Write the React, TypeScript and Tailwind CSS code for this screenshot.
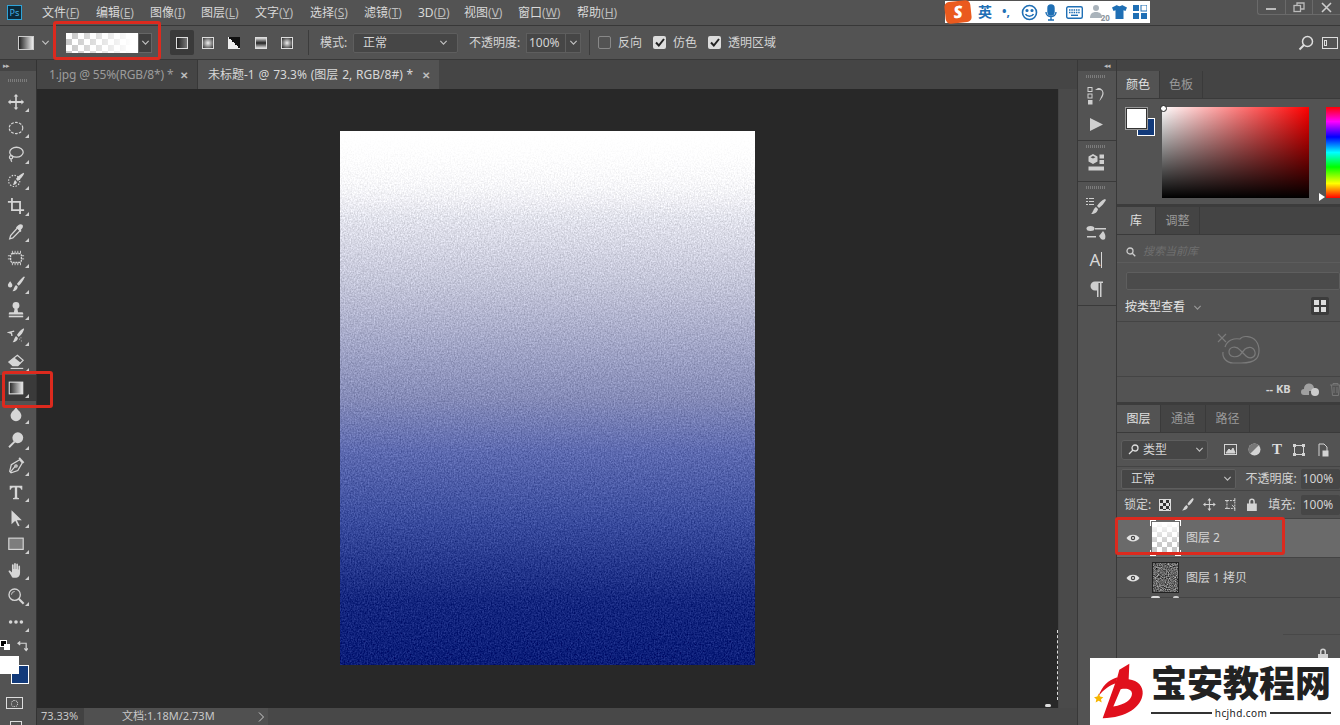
import React from "react";

const C = "#d6d6d6";

function Chev({ c = "#c4c4c4", s = 9 }: { c?: string; s?: number }) {
  return (
    <svg width={s} height={s} viewBox="0 0 10 10" fill="none" stroke={c} strokeWidth="1.2">
      <path d="M1.5 3.2 5 6.8 8.5 3.2" />
    </svg>
  );
}

function U({ t, k }: { t: string; k: string }) {
  return (
    <span className="whitespace-nowrap">
      {t}
      <span className="text-[#bdbdbd]">
        (<span className="underline">{k}</span>)
      </span>
    </span>
  );
}

const toolIcons: React.ReactNode[] = [
  <g key="m" fill={C}><path d="M10 1 7.4 4h1.7v5H4V7.3L1 10l3 2.7V11h5.1v5H7.4l2.6 3 2.6-3h-1.7v-5H16v1.7l3-2.7-3-2.7V9h-5.1V4h1.7z" /></g>,
  <ellipse key="e" cx="10" cy="10" rx="7.5" ry="6.2" fill="none" stroke={C} strokeWidth="1.3" strokeDasharray="3 1.4" />,
  <g key="l" fill="none" stroke={C} strokeWidth="1.4"><ellipse cx="10.5" cy="8" rx="7.5" ry="5.5" /><circle cx="4.5" cy="13.5" r="1.8" /><path d="M4.5 15.5c-.3 1.4.2 2.4 1 3" /></g>,
  <g key="q"><circle cx="8" cy="11" r="6.2" fill="none" stroke={C} strokeWidth="1.3" strokeDasharray="1.6 1.6" /><path d="M18.5 2 19 3c-1.500 3-4 6-7 8l-2-2c2-3 5-5.500 8.500-7zM9 10l2 2.500c-.5 2-2 3-4.500 3 1-1 1-4 2.500-5.500z" fill={C} /></g>,
  <g key="c" fill="none" stroke={C} strokeWidth="2"><path d="M5.500 1v13.500H19" /><path d="M1 5.500h13.500V19" /></g>,
  <g key="d"><path d="m12 5 3 3-8.500 8.500-3.500 1 1-3.500z" fill="none" stroke={C} strokeWidth="1.4" /><path d="m11 4 1.500-1.500c1.500-1.500 3.500-1.500 4.500-.5s1 3-.5 4.500L15 8l1 1-1 1-5-5 1-1z" fill={C} /></g>,
  <g key="h" fill="none" stroke={C}><rect x="4" y="5" width="12" height="10" rx="2.500" strokeWidth="1.400" strokeDasharray="2.200 .8" /><path strokeWidth="1" d="M6 2v3M9 2v3M12 2v3M15 2v3M6 15v3M9 15v3M12 15v3M15 15v3M1 7.500h3M1 11h3M16 7.500h3M16 11h3" /></g>,
  <g key="b" fill={C}><path d="M19 1.500 19.500 2.500c-1 3.500-4 7-6.500 9.500l-2-2C13 7 16 4 19 1.500z" /><path d="M10 11l2 2c-.3 3-2.600 5-6 5 1.700-1.500 1.700-5 4-7zM3.500 7C3.500 7 1 10 1 11.500a2.500 2.500 0 0 0 5 0C6 10 3.500 7 3.500 7z" /></g>,
  <g key="s" fill={C}><circle cx="10" cy="5" r="3.800" /><path d="M8.500 8h3l.8 4.500H17a1.500 1.500 0 0 1 1 1.500v1H2v-1a1.500 1.500 0 0 1 1-1.500h4.700z" /><rect x="2" y="16.300" width="16" height="1.800" /></g>,
  <g key="hb"><path d="M18.500 1.500 19 2.500c-1 3-3 6.500-6 8.500l-2-2c2-3 4.500-6 7.500-7.500zM10 10l2.200 2.200c-.4 2.800-2.700 4.800-6 4.800 1.700-1.500 1.500-4.800 3.800-7z" fill={C} /><path d="M8 4.500 2 6l3 1 .5 3" fill="none" stroke={C} strokeWidth="1.500" /><path d="M14 13v1M16 15v1M15 12h1" stroke={C} /></g>,
  <g key="er"><path d="M11.500 2.500 18 8l-6 6H6.500L2 10z" fill="none" stroke={C} strokeWidth="1.300" /><path d="M2 10l4.500 4.500h5.500L15.500 11 8 5z" fill={C} /><rect x="4" y="16.500" width="14" height="1.300" fill={C} /></g>,
  <g key="g"><defs><linearGradient id="tg"><stop offset="0" stopColor="#222" /><stop offset="1" stopColor="#eee" /></linearGradient></defs><rect x="2.500" y="3.500" width="15" height="13" fill="url(#tg)" stroke="#e4e4e4" strokeWidth="1.200" /></g>,
  <path key="bl" d="M10 2.500C12 6 16 8 16 12a6 6 0 0 1-12 0c0-4 4-6 6-9.500z" fill={C} />,
  <g key="do" fill={C}><circle cx="12" cy="7.500" r="6" /><path d="m7.700 11 1.500 1.500L3 18.800 1.500 17.300z" /></g>,
  <g key="p" fill="none" stroke={C} strokeWidth="1.400"><path d="M14 3 17 6.500 12 15l-7.500 2.500L3 16l1.800-7.500z" /><path d="M3.500 17 9 10.500" /><circle cx="10" cy="10" r="1.300" /><path d="m13.500 1 5 5.500" strokeWidth="2" /></g>,
  <path key="t" d="M3 3h14v4.500h-1.200c-.3-1.500-1-2.600-2.800-2.600h-1.700v10.600c0 .8.500 1 2 1.100V18H6.700v-1.400c1.500-.1 2-.3 2-1.100V4.900H7c-1.800 0-2.500 1.100-2.800 2.600H3z" fill={C} />,
  <path key="ps" d="M5 1.500 16.500 12.500H11l3 6-1.800.8-3-6.300L5 17z" fill={C} />,
  <rect key="r" x="2" y="3.500" width="16" height="12.500" fill="#7d7d7d" stroke={C} strokeWidth="1.300" />,
  <path key="ha" d="M5.500 17.500 1.800 11.800c-.5-1 .8-1.900 1.700-1l2 2V4.500c0-1.200 1.900-1.200 1.900 0V9h.5V3c0-1.200 1.900-1.200 1.900 0v6h.5V3.800c0-1.200 1.900-1.200 1.900 0V9.500h.5V6c0-1.200 1.800-1.200 1.800 0v7c0 3-1.500 5.500-4.200 5.500h-3c-1 0-1.800-.3-2.300-1z" fill={C} />,
  <g key="z" fill="none" stroke={C}><circle cx="8.500" cy="8.500" r="6.300" strokeWidth="1.500" /><path d="m13 13 5.500 5.500" strokeWidth="2.400" /><path d="M5 8.500a3.500 3.500 0 0 1 3.500-3.500" strokeWidth="1" /></g>,
  <g key="dots" fill={C}><circle cx="4" cy="10" r="2" /><circle cx="10" cy="10" r="2" /><circle cx="16" cy="10" r="2" /></g>,
];

function Handle() {
  return <div className="h-[3px] w-[20px] bg-[repeating-linear-gradient(to_right,#7c7c7c_0_1px,transparent_1px_2px)]" />;
}

function LeftBar() {
  return (
    <div className="w-[37px] shrink-0 flex flex-col border-r border-[#333] bg-[#535353]">
      <div className="h-[11px] bg-[#444] flex items-center pl-[3px] text-[7px] leading-none text-[#bbb] tracking-[-1px]">▸▸</div>
      <div className="h-[18px] flex items-center justify-center"><Handle /></div>
      {toolIcons.map((ic, i) => (
        <div key={i} className={`h-[26px] w-[36px] relative flex items-center justify-center ${i === 11 ? "bg-[#3a3a3a]" : ""}`}>
          <svg width="18" height="18" viewBox="0 0 20 20" className="-ml-[5px]">{ic}</svg>
          <div className="absolute right-[7px] bottom-[3px] w-0 h-0 border-l-[4px] border-l-transparent border-b-[4px] border-b-[#cfcfcf]" />
        </div>
      ))}
      <div className="relative flex-1">
        <div className="absolute left-0 top-[5px] w-[7px] h-[7px] bg-black border border-white" />
        <div className="absolute left-[4px] top-[9px] w-[6px] h-[6px] bg-white -z-0" />
        <svg className="absolute left-[17px] top-[5px]" width="11" height="12" viewBox="0 0 12 12" fill="none" stroke={C} strokeWidth="1.300">
          <path d="M1 3h9v8M3.500 1 1 3l2.500 2M8 8.500l2 2.500 2-2.500" />
        </svg>
        <div className="absolute left-[11px] top-[30px] w-[18px] h-[19px] bg-[#123a7a] border border-white" />
        <div className="absolute left-0 top-[21px] w-[19px] h-[18px] bg-white" />
        <div className="absolute left-[6px] top-[62px] w-[17px] h-[12px] border border-[#ddd] flex items-center justify-center">
          <div className="w-[7px] h-[7px] rounded-full border border-dotted border-[#ddd]" />
        </div>
        <div className="absolute left-[10px] top-[86px] w-[12px] h-[6px] border border-[#ddd]" />
      </div>
    </div>
  );
}

function MenuBar() {
  const items: [string, string][] = [["文件", "F"], ["编辑", "E"], ["图像", "I"], ["图层", "L"], ["文字", "Y"], ["选择", "S"], ["滤镜", "T"], ["3D", "D"], ["视图", "V"], ["窗口", "W"], ["帮助", "H"]];
  const widths = [54, 54, 51, 54, 55, 54, 54, 46, 54, 59, 50];
  return (
    <div className="h-[26px] shrink-0 flex items-center border-b border-[#383838] bg-[#535353] relative">
      <div className="ml-[7px] w-[15px] h-[15px] bg-[#0c2a3a] border border-[#2fa3d8] flex items-center justify-center text-[9px] leading-none text-[#43b3e6]">Ps</div>
      <div className="ml-[20px] flex text-[12px] text-[#d9d9d9]">
        {items.map(([t, k], i) => (
          <div key={k} style={{ width: widths[i] }}><U t={t} k={k} /></div>
        ))}
      </div>
      <ImeBar />
      <div className="absolute right-0 top-0 h-[15px] w-[83px] flex border border-t-0 border-r-0 border-[#6a6a6a] rounded-bl-[3px]">
        <div className="flex-1 flex items-center justify-center border-r border-[#6a6a6a]"><div className="w-[10px] h-[2px] bg-[#bbb] mt-[4px]" /></div>
        <div className="flex-1 flex items-center justify-center border-r border-[#6a6a6a]">
          <svg width="12" height="11" viewBox="0 0 12 11" fill="none" stroke="#bbb" strokeWidth="1.300"><rect x="1" y="3.500" width="6.500" height="6" /><path d="M4 3V1h7v6H8" /></svg>
        </div>
        <div className="flex-1 flex items-center justify-center">
          <svg width="11" height="11" viewBox="0 0 11 11" stroke="#ccc" strokeWidth="1.600"><path d="M1 1l9 9M10 1l-9 9" /></svg>
        </div>
      </div>
    </div>
  );
}

function ImeBar() {
  const b = "#1f6fb5";
  return (
    <div className="absolute left-[945px] top-[1px] h-[22px] w-[205px] bg-white flex items-center">
      <div className="w-[26px] h-[22px] bg-[#ea5a1e] rounded-[5px] -rotate-6 flex items-center justify-center text-white font-black text-[17px] leading-[20px] italic">S</div>
      <span className="ml-[7px] text-[14px] font-bold leading-none" style={{ color: b }}>英</span>
      <span className="ml-[10px] text-[12px] font-bold leading-none text-[#1f6fb5]">•,</span>
      <svg className="ml-[11px]" width="17" height="17" viewBox="0 0 17 17" fill="none" stroke={b} strokeWidth="1.600"><circle cx="8.500" cy="8.500" r="7" /><circle cx="6" cy="6.500" r=".8" fill={b} /><circle cx="11" cy="6.500" r=".8" fill={b} /><path d="M4.500 10c1.500 3 6.500 3 8 0" /></svg>
      <svg className="ml-[7px]" width="12" height="17" viewBox="0 0 12 17" fill="none" stroke={b} strokeWidth="1.400"><rect x="3" y="1" width="6" height="10" rx="3" fill={b} /><path d="M1 8c0 6 10 6 10 0M6 12.500V16M3 16h6" /></svg>
      <svg className="ml-[9px]" width="17" height="13" viewBox="0 0 17 13"><rect x=".7" y=".7" width="15.600" height="11.600" rx="1.500" fill="none" stroke={b} strokeWidth="1.400" /><path d="M3 4h11M3 6.500h11" stroke={b} strokeWidth="1.400" strokeDasharray="1.500 .8" /><path d="M5 9.300h7" stroke={b} strokeWidth="1.400" /></svg>
      <div className="ml-[7px] relative w-[18px] h-[16px]">
        <svg width="12" height="15" viewBox="0 0 12 15" fill="#a9b3bb"><circle cx="6" cy="4" r="3" /><path d="M0 14c0-4 2-6 6-6s6 2 6 6z" /></svg>
        <span className="absolute right-[-2px] bottom-[-2px] text-[8px] leading-none font-bold text-[#8b959d]">20</span>
      </div>
      <svg className="ml-[4px]" width="15" height="14" viewBox="0 0 15 14" fill={b}><path d="M5 0c.6 1.500 4.400 1.500 5 0l5 2.500-1.500 3.500-2-.8V14H3.500V5.200l-2 .8L0 2.500z" /></svg>
      <svg className="ml-[6px]" width="14" height="14" viewBox="0 0 14 14" fill={b}><rect width="6" height="6" /><rect x="8" y="0" width="6" height="6" fill="none" stroke={b} /><rect y="8" width="6" height="6" /><rect x="8" y="8" width="6" height="6" /></svg>
    </div>
  );
}

function Sep() {
  return <div className="w-px h-[25px] bg-[#3c3c3c]" />;
}

function ModeIcon({ bg }: { bg: string }) {
  return <div className={`w-[12px] h-[12px] border border-[#ddd] ${bg}`} />;
}

function Check({ on }: { on: boolean }) {
  return on ? (
    <div className="w-[13px] h-[13px] rounded-[2px] bg-[#dcdcdc] flex items-center justify-center">
      <svg width="10" height="9" viewBox="0 0 10 9" fill="none" stroke="#222" strokeWidth="2"><path d="M1 4.500 3.800 7.500 9 1" /></svg>
    </div>
  ) : (
    <div className="w-[13px] h-[13px] rounded-[2px] border border-[#888]" />
  );
}

function OptionsBar() {
  return (
    <div className="h-[34px] shrink-0 flex items-center border-b border-[#383838] bg-[#535353] text-[12px] text-[#d4d4d4]">
      <div className="ml-[18px] w-[16px] h-[14px] border border-[#ccc] bg-[linear-gradient(to_right,#222,#eee)]" />
      <div className="ml-[7px]"><Chev /></div>
      <div className="ml-[4px]"><Sep /></div>
      <div className="ml-[11px] w-[72px] h-[20px] bg-[linear-gradient(to_right,#fff0,#fff_92%),repeating-conic-gradient(#c6c6c6_0_25%,#fff_0_50%)] bg-[length:100%_100%,12px_12px]" />
      <div className="w-[14px] h-[20px] bg-[#3f3f3f] border border-[#666] flex items-center justify-center"><Chev /></div>
      <div className="ml-[18px] w-[24px] h-[25px] bg-[#3a3a3a] rounded-[2px] flex items-center justify-center">
        <div className="w-[12px] h-[12px] border border-[#ddd] bg-[linear-gradient(to_right,#222,#777)]" />
      </div>
      <div className="ml-[8px] w-[12px]"><ModeIcon bg="bg-[radial-gradient(circle,#eee,#333)]" /></div>
      <div className="ml-[14px] w-[12px] h-[12px] bg-[linear-gradient(45deg,#eee_50%,#111_50%)]" />
      <div className="ml-[15px] w-[12px]"><ModeIcon bg="bg-[linear-gradient(to_bottom,#ddd,#222_50%,#ddd)]" /></div>
      <div className="ml-[14px] w-[12px]"><ModeIcon bg="bg-[radial-gradient(circle,#eee,#222)]" /></div>
      <div className="ml-[15px]"><Sep /></div>
      <span className="ml-[11px] w-[33px]">模式:</span>
      <div className="w-[105px] h-[20px] bg-[#464646] border border-[#5e5e5e] rounded-[2px] flex items-center justify-between px-[9px]">
        <span>正常</span><Chev />
      </div>
      <span className="ml-[11px] w-[57px]">不透明度:</span>
      <div className="w-[40px] h-[20px] bg-[#464646] border border-[#5e5e5e] flex items-center pl-[2px]">100%</div>
      <div className="w-[15px] h-[20px] bg-[#464646] border border-l-0 border-[#5e5e5e] flex items-center justify-center"><Chev /></div>
      <div className="ml-[8px]"><Sep /></div>
      <div className="ml-[8px]"><Check on={false} /></div>
      <span className="ml-[7px] w-[28px]">反向</span>
      <div className="ml-[7px]"><Check on /></div>
      <span className="ml-[7px] w-[28px]">仿色</span>
      <div className="ml-[7px]"><Check on /></div>
      <span className="ml-[7px] w-[50px] whitespace-nowrap">透明区域</span>
      <div className="ml-auto flex items-center gap-[8px] pr-[2px]">
        <svg width="16" height="16" viewBox="0 0 16 16" fill="none" stroke="#ddd"><circle cx="9.500" cy="6.500" r="5" strokeWidth="1.500" /><path d="M6 10 1.500 14.500" strokeWidth="2" /></svg>
        <div className="w-[16px] h-[12px] border border-[#ddd] flex items-center pl-[1px]"><div className="w-[3px] h-[6px] border border-[#ddd]" /></div>
      </div>
    </div>
  );
}

function Tabs() {
  return (
    <div className="h-[29px] shrink-0 flex bg-[#454545] text-[12px] text-[#d8d8d8]">
      <div className="w-[161px] flex items-center pl-[12px] border-r border-[#383838] text-[#9c9c9c]">
        <span className="w-[123px] whitespace-nowrap tracking-[-0.15px]">1.jpg @ 55%(RGB/8*) *</span>
        <span className="ml-[8px] text-[10px] leading-none font-bold text-[#bdbdbd]">✕</span>
      </div>
      <div className="w-[241px] flex items-center pl-[10px] bg-[#535353]">
        <span className="w-[205px] whitespace-nowrap [word-spacing:.7px]">未标题-1 @ 73.3% (图层 2, RGB/8#) *</span>
        <span className="ml-[9px] text-[10px] leading-none font-bold text-[#bdbdbd]">✕</span>
      </div>
    </div>
  );
}

function Doc() {
  return (
    <svg width="415" height="534" className="block" aria-label="doc">
      <defs>
        <linearGradient id="docg" x1="0" y1="0" x2="0" y2="1">
          <stop offset="0" stopColor="#ffffff" />
          <stop offset=".1" stopColor="#f2f2f6" />
          <stop offset=".3" stopColor="#bfc1d6" />
          <stop offset=".5" stopColor="#858bb8" />
          <stop offset=".6" stopColor="#5d6ab0" />
          <stop offset=".73" stopColor="#3a4c9e" />
          <stop offset=".88" stopColor="#14267f" />
          <stop offset="1" stopColor="#0a1c78" />
        </linearGradient>
        <filter id="grain" x="0" y="0" width="100%" height="100%" colorInterpolationFilters="sRGB">
          <feTurbulence type="fractalNoise" baseFrequency="0.7 0.6" numOctaves="2" seed="4" result="n" />
          <feColorMatrix in="n" type="matrix" values="0 0 0 1 0  0 0 0 1 0  0 0 0 1 0  0 0 0 0 1" result="g" />
          <feComposite in="SourceGraphic" in2="g" operator="arithmetic" k1="0" k2="1" k3="0.3" k4="-0.15" />
        </filter>
        <linearGradient id="topfade" x1="0" y1="0" x2="0" y2="1">
          <stop offset="0" stopColor="#fff" stopOpacity="1" />
          <stop offset=".16" stopColor="#fff" stopOpacity="0" />
        </linearGradient>
      </defs>
      <rect width="415" height="534" fill="url(#docg)" filter="url(#grain)" />
      <rect width="415" height="534" fill="url(#topfade)" />
    </svg>
  );
}

function Middle() {
  return (
    <div className="w-[1040px] shrink-0 flex flex-col">
      <Tabs />
      <div className="flex-1 flex min-h-0">
        <div className="w-[1021px] bg-[#282828] flex items-center justify-center relative pb-[1px]">
          <Doc />
          <div className="absolute right-0 bottom-[8px] h-[70px] border-r border-dashed border-[#ddd]" />
          <div className="absolute right-[7px] bottom-[1px] w-[6px] h-[3px] bg-[#ddd] rounded-full" />
        </div>
        <div className="w-[19px] bg-[#4a4a4a] border-l border-[#444]" />
      </div>
      <div className="h-[17px] shrink-0 flex items-center bg-[#484848] text-[11px] text-[#c8c8c8]">
        <div className="w-[47px] h-full bg-[#424242] pl-[4px] flex items-center">73.33%</div>
        <div className="w-[184px] h-full bg-[#505050] flex items-center pl-[38px] relative">
          <span className="whitespace-nowrap">文档:1.18M/2.73M</span>
          <svg className="absolute right-[3px]" width="7" height="10" viewBox="0 0 7 10" fill="none" stroke="#ccc"><path d="M1 0.500 5.500 5 1 9.500" /></svg>
        </div>
      </div>
    </div>
  );
}

function Dock() {
  const g = "#cfcfcf";
  return (
    <div className="w-[40px] shrink-0 flex flex-col bg-[#535353] border-l border-r border-[#383838] pl-[0px]">
      <div className="h-[11px] bg-[#444] flex justify-end items-center pr-[6px] text-[7px] leading-none text-[#bbb] tracking-[-1px]">◂◂</div>
      <div className="h-[70px] flex flex-col items-center border-b border-[#3a3a3a] pt-[4px] pr-[2px]">
        <Handle />
        <svg className="mt-[9px]" width="18" height="18" viewBox="0 0 18 18" fill={g}>
          <rect x="1" y="0.500" width="4" height="4" fill="none" stroke={g} /><rect x="1" y="7" width="4" height="4" fill="none" stroke={g} /><rect x="1" y="13" width="4.500" height="4.500" />
          <path d="M8 3h5c3 0 3 4 1 7l-2 4.500c2-2 5-6 4.500-9-.5-3-3-4.500-4.500-4.500H11L8 3z" />
        </svg>
        <svg className="mt-[12px]" width="15" height="15" viewBox="0 0 15 15" fill={g}><path d="M1 1 14 7.500 1 14z" /></svg>
      </div>
      <div className="h-[41px] flex flex-col items-center border-b border-[#3a3a3a] pt-[4px] pr-[2px]">
        <Handle />
        <svg className="mt-[6px]" width="17" height="17" viewBox="0 0 17 17" fill={g}>
          <path d="M5 0 9.500 2.500v5L5 10 .5 7.500v-5zM5 2 2.500 3.300 5 4.600l2.500-1.300z" fillRule="evenodd" />
          <rect x="11.500" y="0.500" width="4.500" height="4" /><rect x="11.500" y="6" width="4.500" height="4" /><rect x="0.500" y="12.500" width="15.500" height="4" />
        </svg>
      </div>
      <div className="h-[124px] flex flex-col items-center border-b border-[#3a3a3a] pt-[4px] pr-[2px]">
        <Handle />
        <svg className="mt-[8px]" width="20" height="18" viewBox="0 0 20 18" fill={g}>
          <path d="M0 1h2v1H0zM3 1h5v1H3zM0 4h2v1H0zM3 4h5v1H3zM0 7h2v1H0zM3 7h5v1H3z" />
          <path d="M19 2 20 3c-2 3-4 6-7 8l-2-2c2-3 5-6 8-7zM10 10l2 2c-.4 3-3 5-7 5 2-1 2-5 5-7z" />
        </svg>
        <svg className="mt-[10px]" width="20" height="17" viewBox="0 0 20 17" fill={g}>
          <ellipse cx="4.500" cy="3.500" rx="4" ry="2.500" /><rect x="9" y="3" width="11" height="1.500" /><rect x="1" y="11" width="9" height="1.500" />
          <path d="M17 6c2 2 3 5 2 8-1 1-3 1-4 0l-2-3z" />
        </svg>
        <span className="mt-[8px] text-[17px] leading-[20px] text-[#d8d8d8] flex items-center">A<span className="w-px h-[16px] bg-[#d8d8d8] ml-[1px]" /></span>
        <svg className="mt-[11px]" width="13" height="16" viewBox="0 0 13 16" fill={g}><path d="M5 0.500h8V2h-1.500v14H10V2H8.500v14H7V9.500H5A4.500 4.500 0 0 1 5 0.500z" /></svg>
      </div>
    </div>
  );
}

function TabHead({ tabs, h = 28, widths }: { tabs: string[]; h?: number; widths: number[] }) {
  return (
    <div className="flex bg-[#444] text-[12px] border-b border-[#3a3a3a] shrink-0" style={{ height: h }}>
      {tabs.map((t, i) => (
        <div key={t} style={{ width: widths[i] }} className={`flex items-center justify-center border-r border-[#3a3a3a] ${i === 0 ? "bg-[#535353] text-[#e0e0e0]" : "text-[#9a9a9a]"}`}>
          {t}
        </div>
      ))}
    </div>
  );
}

function ColorPanel() {
  return (
    <div className="h-[136px] shrink-0 border-b-[3px] border-[#3c3c3c] flex flex-col">
      <TabHead tabs={["颜色", "色板"]} widths={[43, 43]} />
      <div className="flex flex-1 pt-[8px] pl-[9px]">
        <div className="relative w-[36px] h-[34px] shrink-0">
          <div className="absolute left-[11px] top-[11px] w-[18px] h-[18px] bg-[#123a7a] border border-white" />
          <div className="absolute left-0 top-[1px] w-[21px] h-[21px] bg-white border border-[#333] outline outline-1 outline-[#999]" />
        </div>
        <div className="relative w-[147px] h-[91px] shrink-0 bg-[linear-gradient(to_top,#000,transparent),linear-gradient(to_right,#fff,#f00)]">
          <div className="absolute -left-[2px] -top-[2px] w-[7px] h-[7px] rounded-full border border-[#222] bg-white" />
        </div>
        <div className="ml-[17px] w-[14px] relative h-[91px] shrink-0 bg-[linear-gradient(to_bottom,#f00,#f0f_16%,#00f_33%,#0ff_50%,#0f0_66%,#ff0_84%,#f00)]">
          <div className="absolute -left-[7px] bottom-[-3px] w-0 h-0 border-l-[6px] border-l-white border-y-[4px] border-y-transparent" />
        </div>
      </div>
    </div>
  );
}

function LibPanel() {
  return (
    <div className="h-[198px] shrink-0 border-b-[3px] border-[#3c3c3c] flex flex-col text-[12px]">
      <TabHead tabs={["库", "调整"]} widths={[39, 44]} />
      <div className="h-[28px] flex items-center pl-[9px] pt-[6px] border-b border-[#5c5c5c] shrink-0">
        <svg width="10" height="10" viewBox="0 0 10 10" fill="none" stroke="#ccc" strokeWidth="1.300"><circle cx="4" cy="4" r="3" /><path d="m6.300 6.300 3 3" /></svg>
        <span className="ml-[7px] italic text-[11px] text-[#6f6f6f]">搜索当前库</span>
      </div>
      <div className="h-[18px] mt-[9px] ml-[9px] bg-[#4b4b4b] border border-[#5e5e5e] rounded-[2px] shrink-0" />
      <div className="h-[32px] flex items-center pl-[8px] pt-[3px] border-b border-[#444] shrink-0 relative">
        <span className="text-[#e4e4e4]">按类型查看</span>
        <div className="ml-[8px]"><Chev c="#999" /></div>
        <div className="absolute left-[194px] top-[7px] w-[18px] h-[18px] bg-[#3c3c3c] rounded-[2px] grid grid-cols-2 gap-[1.500px] p-[3px]">
          <div className="bg-[#ddd]" /><div className="bg-[#ddd]" /><div className="bg-[#ddd]" /><div className="bg-[#ddd]" />
        </div>
      </div>
      <div className="h-[55px] flex items-center pl-[100px] border-b border-[#444] shrink-0">
        <svg width="46" height="32" viewBox="0 0 46 32" fill="none" stroke="#7b7b7b" strokeWidth="1.200">
          <path d="M1 1l8 8M9 1 1 9" />
          <path d="M8 14c2-7 9-9 15-8 3-4 12-3 16 2 4 5 4 14 0 18-3 3-9 4-15 4H16C10 30 5 25 6 19" />
          <path d="M12 19c0-5 7-7 11-2l6 6c4 4 10 1 9-4-1-5-6-6-10-3l-5 6c-4 3-11 2-11-3z" />
        </svg>
      </div>
      <div className="flex-1 flex items-center pl-[149px] text-[#d4d4d4]">
        <span className="font-bold text-[11px] whitespace-nowrap">-- KB</span>
        <svg className="ml-[10px] shrink-0" width="20" height="13" viewBox="0 0 20 13" fill="#a0a0a0"><path d="M3 12a3 3 0 0 1 0-6 5 5 0 0 1 10-1c2 0 3 2 3 3H8v4z" /><circle cx="14" cy="9" r="4" fill="#ccc" /></svg>
        <svg className="ml-[9px] shrink-0" width="11" height="13" viewBox="0 0 11 13" fill="none" stroke="#777"><path d="M0 2h11M3 2V.5h5V2M1.500 2 2.500 12.500h6L9.500 2M4 4v6M7 4v6" /></svg>
      </div>
    </div>
  );
}

function Eye() {
  return (
    <svg width="14" height="10" viewBox="0 0 14 10">
      <path d="M0.500 5C3 .5 11 .5 13.500 5 11 9.500 3 9.500 .5 5z" fill="#e4e4e4" />
      <circle cx="7" cy="5" r="2.200" fill="#444" />
      <circle cx="7" cy="5" r="1" fill="#e4e4e4" />
    </svg>
  );
}

function LayersPanel() {
  const ic = "#d4d4d4";
  return (
    <div className="flex-1 flex flex-col text-[12px] text-[#d4d4d4] min-h-0">
      <TabHead tabs={["图层", "通道", "路径"]} widths={[44, 45, 44]} />
      <div className="h-[34px] flex items-center pl-[4px] border-b border-[#444] shrink-0">
        <div className="w-[87px] h-[20px] bg-[#464646] border border-[#5e5e5e] rounded-[3px] flex items-center pl-[6px] pr-[3px]">
          <svg width="11" height="11" viewBox="0 0 11 11" fill="none" stroke="#ddd" strokeWidth="1.300"><circle cx="7" cy="4" r="3" /><path d="M5 6 1 10" /></svg>
          <span className="ml-[4px]">类型</span>
          <div className="ml-auto"><Chev /></div>
        </div>
        <svg className="ml-[16px]" width="13" height="11" viewBox="0 0 13 11" fill="none" stroke={ic}><rect x=".5" y=".5" width="12" height="10" /><path d="M2 9l3-4 2 2 2-3 2 5z" fill={ic} /></svg>
        <svg className="ml-[11px]" width="13" height="13" viewBox="0 0 13 13"><circle cx="6.500" cy="6.500" r="6" fill={ic} /><path d="M2.200 10.800A6 6 0 0 1 10.800 2.200z" fill="#777" /></svg>
        <span className="ml-[11px] font-['Liberation_Serif',serif] font-bold text-[15px] leading-none text-[#ddd]">T</span>
        <svg className="ml-[11px]" width="12" height="12" viewBox="0 0 12 12" fill="none" stroke={ic}><rect x="1.500" y="1.500" width="9" height="9" /><path d="M0 0h3v3H0zM9 0h3v3H9zM0 9h3v3H0zM9 9h3v3H9z" fill={ic} stroke="none" /></svg>
        <svg className="ml-[12px]" width="12" height="14" viewBox="0 0 12 14" fill="none" stroke={ic}><path d="M2 13V1h5l3 3v4" /><rect x="6" y="8" width="5" height="5" fill={ic} /></svg>
      </div>
      <div className="h-[24px] flex items-center pl-[4px] border-b border-[#444] shrink-0">
        <div className="w-[117px] h-[20px] bg-[#464646] border border-[#5e5e5e] rounded-[2px] flex items-center justify-between pl-[9px] pr-[3px]">
          <span>正常</span><Chev />
        </div>
        <span className="ml-[9px] whitespace-nowrap w-[56px]">不透明度:</span>
        <div className="w-[40px] h-[20px] bg-[#464646] rounded-[2px] flex items-center pl-[2px]">100%</div>
      </div>
      <div className="h-[27px] flex items-center pl-[7px] shrink-0">
        <span className="w-[36px]">锁定:</span>
        <div className="w-[12px] h-[12px] border border-[#ddd] bg-[repeating-conic-gradient(#ddd_0_25%,#333_0_50%)] bg-[length:6px_6px]" />
        <svg className="ml-[10px]" width="13" height="13" viewBox="0 0 13 13" fill={ic}><path d="M12 0l1 1c-1 3-3 5-5 6.500L6.500 6C8 4 10 1.500 12 0zM5.500 7 7 8.500c-.3 2.500-2.500 4-6 4 1.700-1 2-4 4.500-5.500z" /></svg>
        <svg className="ml-[9px]" width="13" height="13" viewBox="0 0 13 13" fill={ic}><path d="M6.500 0 4.500 2.500H6V6H2.500V4.500L0 6.500 2.500 8.500V7H6v3.500H4.500L6.500 13l2-2.500H7V7h3.500v1.500L13 6.500 10.500 4.500V6H7V2.500h1.500z" /></svg>
        <svg className="ml-[9px]" width="13" height="13" viewBox="0 0 13 13" fill="none" stroke={ic}><rect x="2" y="2.500" width="8" height="8" strokeDasharray="2 1" /><path d="M0 2.500h3M10 0v3M10 10v3M0 10.500h3M7 7l3 3" /></svg>
        <svg className="ml-[9px]" width="12" height="13" viewBox="0 0 12 13" fill={ic}><path d="M3 5.500V3.500a3 3 0 0 1 6 0v2h-1.500v-2a1.500 1.500 0 0 0-3 0v2zM1 5.500h10V13H1z" /></svg>
        <span className="ml-[10px] w-[33px]">填充:</span>
        <div className="w-[40px] h-[20px] bg-[#464646] rounded-[2px] flex items-center pl-[2px]">100%</div>
      </div>
      <div className="h-[40px] bg-[#6a6a6a] flex items-center border-y border-[#444] shrink-0">
        <div className="w-[32px] flex justify-center"><Eye /></div>
        <div className="ml-[3px] w-[27px] h-[32px] relative bg-[linear-gradient(to_bottom,#fff,#fff0_70%),repeating-conic-gradient(#c8c8c8_0_25%,#fff_0_50%)] bg-[length:100%_100%,10px_10px]">
          <div className="absolute -left-[2px] -top-[2px] w-[6px] h-[6px] border-l border-t border-white" />
          <div className="absolute -right-[2px] -top-[2px] w-[6px] h-[6px] border-r border-t border-white" />
          <div className="absolute -left-[2px] -bottom-[2px] w-[6px] h-[6px] border-l border-b border-white" />
          <div className="absolute -right-[2px] -bottom-[2px] w-[6px] h-[6px] border-r border-b border-white" />
        </div>
        <span className="ml-[7px]">图层 2</span>
      </div>
      <div className="h-[40px] flex items-center border-b border-[#444] shrink-0 relative">
        <div className="w-[32px] flex justify-center"><Eye /></div>
        <svg className="ml-[3px] border border-[#222]" width="27" height="31">
          <filter id="lg" colorInterpolationFilters="sRGB"><feTurbulence type="fractalNoise" baseFrequency="0.9" numOctaves="2" seed="3" /><feColorMatrix type="matrix" values="0 0 0 1 -.1  0 0 0 1 -.1  0 0 0 1 -.1  0 0 0 0 1" /></filter>
          <rect width="27" height="31" filter="url(#lg)" />
        </svg>
        <span className="ml-[7px] whitespace-nowrap">图层 1 拷贝</span>
        <div className="absolute left-[34px] bottom-[-1px] w-[9px] h-[2px] rounded-t-full bg-[#ddd]" />
        <div className="absolute left-[56px] bottom-[-1px] w-[6px] h-[2px] rounded-t-full bg-[#ccc]" />
      </div>
      <div className="relative flex-1">
        <div className="absolute left-[166px] right-0 top-[36px] border-t border-[#484848]" />
        <svg className="absolute right-[11px] top-[50px]" width="12" height="14" viewBox="0 0 12 14" fill="#cfcfcf"><path d="M3 6V3.500a3 3 0 0 1 6 0V6H7.500V3.500a1.500 1.500 0 0 0-3 0V6zM1 6h10v8H1z" /></svg>
      </div>
    </div>
  );
}

function RightPanels() {
  return (
    <div className="w-[223px] shrink-0 flex flex-col bg-[#535353] overflow-hidden">
      <div className="h-[11px] bg-[#444] shrink-0" />
      <ColorPanel />
      <LibPanel />
      <LayersPanel />
    </div>
  );
}

function Watermark() {
  return (
    <div className="absolute left-[1090px] top-[658px] w-[250px] h-[67px] bg-white flex z-10">
      <svg width="60" height="67" viewBox="180 205 180 200" className="shrink-0">
        <path fillRule="evenodd" fill="#e0101c" d="M298 222 296 268C325 272 340 290 338 312 335 350 290 385 218 385L262 262 268 240ZM272 298 250 350C285 345 305 330 306 312 306 298 290 294 272 298Z" />
        <path fill="#e0101c" d="M262 262C235 270 215 290 206 318 222 298 240 285 258 280Z" />
        <path fill="#f7b500" d="M206 311 210 320 220 322 213 328 215 338 206 333 197 338 199 328 192 322 202 320Z" />
      </svg>
      <div className="ml-[1px] flex flex-col w-[180px]">
        <div className="h-[44px] mt-[4px] flex items-center text-[36px] leading-none font-black text-[#222] whitespace-nowrap">宝安教程网</div>
        <div className="flex items-center mt-[2px]">
          <div className="flex-1 h-[2px] bg-[#333]" />
          <span className="mx-[3px] text-[10px] leading-none tracking-[.4px] text-[#222]">hcjhd.com</span>
          <div className="flex-1 h-[2px] bg-[#333]" />
        </div>
      </div>
    </div>
  );
}

function RedBox({ c }: { c: string }) {
  return <div className={`absolute border-[3px] border-[#dc2a1e] rounded-[3px] z-20 ${c}`} />;
}

export default function App() {
  return (
    <div className="relative w-[1340px] h-[725px] overflow-hidden flex flex-col bg-[#535353] font-['Noto_Sans','Noto_Sans_CJK_SC',sans-serif]">
      <MenuBar />
      <OptionsBar />
      <div className="flex flex-1 min-h-0">
        <LeftBar />
        <Middle />
        <Dock />
        <RightPanels />
      </div>
      <Watermark />
      <RedBox c="left-[53px] top-[21px] w-[108px] h-[39px]" />
      <RedBox c="left-[2px] top-[371px] w-[51px] h-[37px]" />
      <RedBox c="left-[1115px] top-[517px] w-[170px] h-[38px]" />
    </div>
  );
}
